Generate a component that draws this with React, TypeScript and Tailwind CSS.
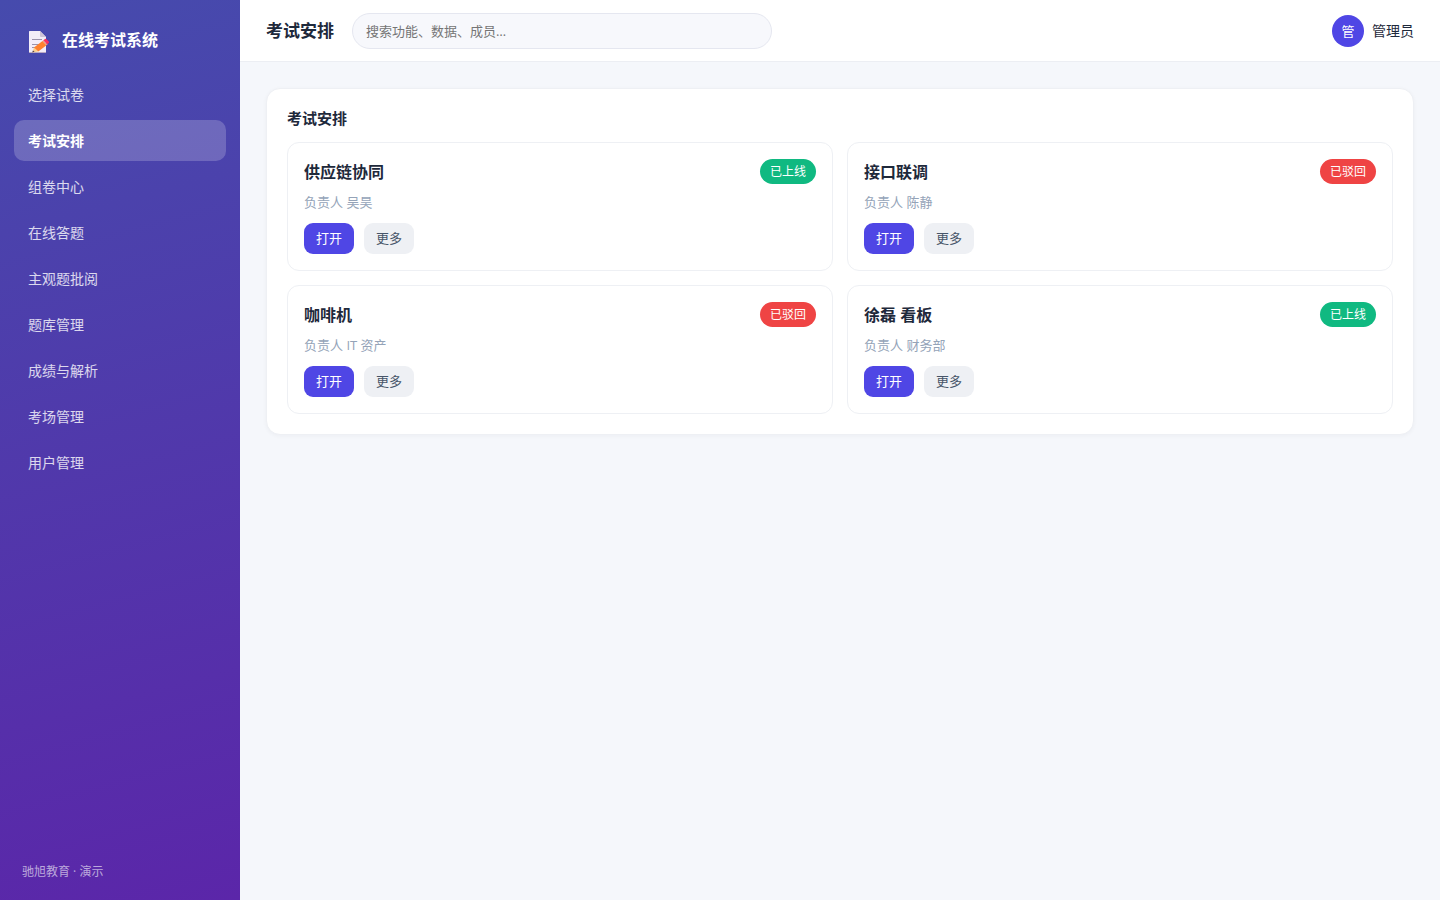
const NAV_ITEMS = [
  '选择试卷',
  '考试安排',
  '组卷中心',
  '在线答题',
  '主观题批阅',
  '题库管理',
  '成绩与解析',
  '考场管理',
  '用户管理',
]

const ACTIVE = '考试安排'

interface Exam {
  name: string
  owner: string
  status: string
}

const EXAMS: Exam[] = [
  { name: '供应链协同', owner: '吴昊', status: '已上线' },
  { name: '接口联调', owner: '陈静', status: '已驳回' },
  { name: '咖啡机', owner: 'IT 资产', status: '已驳回' },
  { name: '徐磊 看板', owner: '财务部', status: '已上线' },
]

const STATUS_COLORS: Record<string, string> = {
  已上线: 'bg-[#10b981]',
  已驳回: 'bg-[#ef4444]',
}

function MemoIcon() {
  return (
    <svg width="22" height="24" viewBox="0 0 22 24" aria-hidden="true">
      <path d="M1.500 1H12l6 6v15.500H1V1.500q0-.5.5-.5z" fill="#f3eef8" />
      <path d="M12 1l6 6h-5q-1 0-1-1z" fill="#cdc4d6" />
      <path d="M1 22h17v1H1z" fill="#b9a9c4" />
      <path d="M4 9.500h10M4 14.500h8M4 17.500h4" stroke="#9b93ab" strokeWidth="1" />
      <path d="M4.300 22.500 6 17.500l4.300 4z" fill="#fcd08a" />
      <path d="m4.300 22.500.6-2 1.700 1.300z" fill="#4a3b50" />
      <path d="M6 17.500 14.500 11l4 4.300-8.200 6.200z" fill="#ff822d" />
      <path d="m14.500 11 1.200-.9 4 4.300-1.200.9z" fill="#e39a8c" />
      <path d="m15.500 10.200 1.500-1.100q.8-.6 1.500.1l2.300 2.400q.7.8-.1 1.400l-1.400 1.200z" fill="#f92f60" />
    </svg>
  )
}

function ExamCard({ exam }: { exam: Exam }) {
  return (
    <article className="rounded-xl border border-[#eef0f4] p-4">
      <div className="flex items-start justify-between">
        <h3 className="text-base leading-[26px] font-bold">{exam.name}</h3>
        <span className={`rounded-full px-2.5 text-xs leading-[25px] text-white ${STATUS_COLORS[exam.status]}`}>
          {exam.status}
        </span>
      </div>
      <p className="mt-[7px] text-[13px] leading-5 text-[#94a3b8]">负责人 {exam.owner}</p>
      <div className="mt-[11px] flex gap-2.5">
        <button type="button" className="h-[31px] rounded-[9px] bg-[#4f46e5] px-3 text-[13px] text-white">
          打开
        </button>
        <button type="button" className="h-[31px] rounded-[9px] bg-[#eef0f4] px-3 text-[13px] text-[#475569]">
          更多
        </button>
      </div>
    </article>
  )
}

export default function App() {
  return (
    <div className="flex min-h-screen bg-[#f5f7fb] font-['Open_Sans','Noto_Sans_CJK_SC',sans-serif] text-sm text-[#1e293b]">
      {/* Sidebar */}
      <aside className="flex w-60 shrink-0 flex-col bg-[linear-gradient(165deg,#464bad,#5b26a9)] px-3.5 text-white">
        <div className="flex items-end gap-3 px-3.5 pt-7 pb-5">
          <MemoIcon />
          <span className="pb-0.5 text-base leading-6 font-bold">在线考试系统</span>
        </div>
        <nav className="flex flex-col gap-[5px]">
          {NAV_ITEMS.map(item => (
            <a
              key={item}
              href="#"
              aria-current={item === ACTIVE ? 'page' : undefined}
              className={`rounded-[10px] px-3.5 py-2.5 leading-[21px] ${
                item === ACTIVE ? 'bg-white/20 font-bold text-white' : 'text-white/80'
              }`}
            >
              {item}
            </a>
          ))}
        </nav>
        <p className="mt-auto px-2 pb-[19px] text-xs leading-[18px] text-white/60">驰旭教育 · 演示</p>
      </aside>

      <div className="flex min-w-0 flex-1 flex-col">
        {/* Top bar */}
        <header className="flex items-center border-b border-[#eceef3] bg-white px-[26px] pt-[13px] pb-3">
          <h1 className="text-[17px] leading-6 font-bold">考试安排</h1>
          <input
            type="search"
            aria-label="搜索"
            placeholder="搜索功能、数据、成员…"
            className="ml-[18px] h-9 w-[420px] rounded-full border border-[#e5e7f0] bg-[#f7f8fc] px-[13px] text-[13px] placeholder:text-[#757575]"
          />
          <div className="ml-auto flex items-center gap-2">
            <span className="flex size-8 items-center justify-center rounded-full bg-[#4f46e5] text-[13px] text-white">管</span>
            <span>管理员</span>
          </div>
        </header>

        <main className="p-[26px]">
          <section className="rounded-[14px] border border-[#eef0f4] bg-white px-5 pt-[19px] pb-5 shadow-[0_1px_4px_rgba(15,23,42,0.04)]">
            <h2 className="mb-3.5 text-[15px] leading-5 font-bold">考试安排</h2>
            <div className="grid grid-cols-2 gap-3.5">
              {EXAMS.map(exam => (
                <ExamCard key={exam.name} exam={exam} />
              ))}
            </div>
          </section>
        </main>
      </div>
    </div>
  )
}
